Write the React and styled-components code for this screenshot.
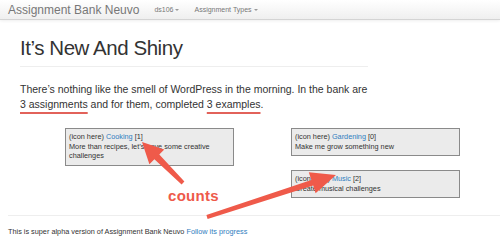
import React from "react";
import styled, { createGlobalStyle } from "styled-components";

const GlobalStyle = createGlobalStyle`
  html, body { margin: 0; padding: 0; background: #fff; }
  body { font-family: "Liberation Sans", Arial, sans-serif; color: #333; }
`;

const Page = styled.div`
  position: relative;
  width: 500px;
  height: 245px;
  overflow: hidden;
  background: #fff;
`;

const Navbar = styled.nav`
  display: flex;
  align-items: center;
  height: 19px;
  padding-left: 8px;
  background: linear-gradient(#ffffff, #efefef);
  border-bottom: 1px solid #d4d4d4;
  box-shadow: 0 1px 3px rgba(0, 0, 0, 0.07);
`;

const Brand = styled.span`
  font-size: 12px;
  color: #777;
  margin-right: 15px;
`;

const NavItem = styled.span`
  display: inline-flex;
  align-items: center;
  font-size: 7px;
  color: #777;
  margin-right: 15px;
  &::after {
    content: "";
    margin-left: 2px;
    border-left: 2px solid transparent;
    border-right: 2px solid transparent;
    border-top: 2px solid #999;
  }
`;

const Main = styled.main`
  padding: 0 20px;
`;

const PageHeader = styled.header`
  width: 348px;
  margin-top: 16px;
  padding-bottom: 7px;
  border-bottom: 1px solid #eee;
`;

const Title = styled.h1`
  margin: 0;
  font-size: 20.5px;
  line-height: 23px;
  letter-spacing: -0.45px;
  font-weight: 400;
  color: #333;
`;

const Lead = styled.p`
  margin: 15px 0 0;
  width: 352px;
  font-size: 10.5px;
  line-height: 15px;
  color: #333;
`;

const Mark = styled.span`
  text-decoration: underline;
  text-decoration-color: #e2625a;
  text-decoration-thickness: 2px;
  text-underline-offset: 4px;
`;

const Columns = styled.section`
  display: flex;
  gap: 57px;
  margin-top: 16px;
  padding-left: 45px;
`;

const Column = styled.div`
  display: flex;
  flex-direction: column;
  gap: 14px;
  width: 169px;
`;

const Card = styled.div`
  background: #ebebeb;
  border: 1px solid #8a8a8a;
  padding: 3px 4px 4px 3px;
  font-size: 7.3px;
  line-height: 9.5px;
  color: #333;
`;

const Link = styled.a`
  color: #2f7ec0;
  text-decoration: none;
`;

const Footer = styled.footer`
  margin: 17px 0 0 8px;
  border-top: 1px solid #eee;
  padding-top: 11px;
  font-size: 7.3px;
  line-height: 10px;
  color: #333;
`;

const Overlay = styled.div`
  position: absolute;
  inset: 0;
  pointer-events: none;
`;

const Counts = styled.span`
  position: absolute;
  left: 168px;
  top: 187px;
  font-family: "Liberation Sans Narrow", "Liberation Sans", Arial, sans-serif;
  font-size: 15px;
  font-weight: 700;
  color: #ee5a4a;
  letter-spacing: 0.3px;
`;

function arrowPoints([tx, ty], [hx, hy], w0, w1, headLen, headW) {
  const dx = hx - tx;
  const dy = hy - ty;
  const len = Math.hypot(dx, dy);
  const ux = dx / len;
  const uy = dy / len;
  const nx = -uy;
  const ny = ux;
  const bx = hx - ux * headLen;
  const by = hy - uy * headLen;
  const p = (x, y) => `${x.toFixed(1)},${y.toFixed(1)}`;
  return [
    p(tx + nx * w0 / 2, ty + ny * w0 / 2),
    p(bx + nx * w1 / 2, by + ny * w1 / 2),
    p(bx + nx * headW / 2, by + ny * headW / 2),
    p(hx, hy),
    p(bx - nx * headW / 2, by - ny * headW / 2),
    p(bx - nx * w1 / 2, by - ny * w1 / 2),
    p(tx - nx * w0 / 2, ty - ny * w0 / 2),
  ].join(" ");
}

const cards = [
  [{ name: "Cooking", count: 1, text: "More than recipes, let\u2019s have some creative challenges" }],
  [
    { name: "Gardening", count: 0, text: "Make me grow something new" },
    { name: "Music", count: 2, text: "Create musical challenges" },
  ],
];

export default function App() {
  return (
    <Page>
      <GlobalStyle />
      <Navbar>
        <Brand>Assignment Bank Neuvo</Brand>
        <NavItem>ds106</NavItem>
        <NavItem>Assignment Types</NavItem>
      </Navbar>
      <Main>
        <PageHeader>
          <Title>It’s New And Shiny</Title>
        </PageHeader>
        <Lead>
          There’s nothing like the smell of WordPress in the morning. In the bank are{" "}
          <Mark>3 assignments</Mark> and for them, completed <Mark>3 examples</Mark>.
        </Lead>
        <Columns>
          {cards.map((col, i) => (
            <Column key={i}>
              {col.map((c) => (
                <Card key={c.name}>
                  (icon here) <Link href="#">{c.name}</Link> [{c.count}]
                  <br />
                  {c.text}
                </Card>
              ))}
            </Column>
          ))}
        </Columns>
      </Main>
      <Footer>
        This is super alpha version of Assignment Bank Neuvo <Link href="#">Follow its progress</Link>
      </Footer>
      <Overlay>
        <svg width="500" height="245" viewBox="0 0 500 245">
          <polygon fill="#ef5a4a" points={arrowPoints([183, 183], [142, 142], 4, 7, 21, 21)} />
          <polygon fill="#ef5a4a" points={arrowPoints([207, 217], [336, 175], 4, 6, 25, 22)} />
        </svg>
        <Counts>counts</Counts>
      </Overlay>
    </Page>
  );
}
